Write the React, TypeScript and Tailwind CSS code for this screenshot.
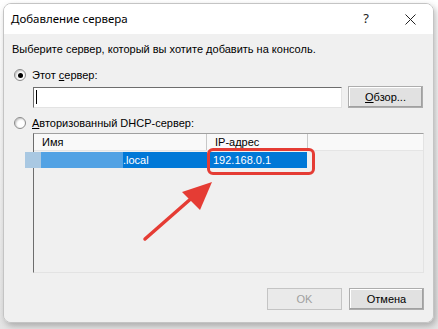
import React from "react";

function Radio({ checked }: { checked?: boolean }) {
  return (
    <span className="w-[12px] h-[12px] rounded-full border border-[#8a8a8a] bg-white shadow-[inset_1px_1px_2px_rgba(0,0,0,0.25)] flex items-center justify-center shrink-0">
      {checked && <span className="w-[5px] h-[5px] rounded-full bg-black" />}
    </span>
  );
}

export default function App() {
  return (
    <div
      className="w-[438px] h-[329px] bg-gradient-to-b from-white to-[#e4e4e4] pt-[3px] pl-[3px] overflow-hidden"
      style={{ fontFamily: '"Liberation Sans", Arial, sans-serif' }}
    >
      <div className="relative w-[431px] h-[320px] rounded-[8px] border border-[#c4c4c4] overflow-hidden flex flex-col shadow-[2px_3px_6px_rgba(0,0,0,0.25)]">
        {/* title bar */}
        <div className="h-[30px] bg-white flex items-center pl-[7px] shrink-0">
          <span className="text-[11.5px] text-black" style={{ fontFamily: '"Noto Sans", sans-serif' }}>
            Добавление сервера
          </span>
          <span className="ml-auto text-[13px] text-[#222] mr-[36px]" style={{ fontFamily: '"Noto Sans", sans-serif' }}>?</span>
          <svg width="11" height="11" viewBox="0 0 11 11" className="mr-[17px]">
            <path d="M0.5 0.5 L10.5 10.5 M10.5 0.5 L0.5 10.5" stroke="#222" strokeWidth="1" />
          </svg>
        </div>

        {/* body */}
        <div className="flex-1 bg-[#f0f0f0] flex flex-col pl-[8px] pr-[9px] pt-[8px] text-[11px] text-black">
          <div className="h-[14px] leading-[14px]">
            Выберите сервер, который вы хотите добавить на консоль.
          </div>

          <div className="flex items-center gap-[6px] mt-[12px] pl-[2px] h-[14px]">
            <Radio checked />
            <span className="leading-[14px]">
              Этот <span className="underline">с</span>ервер:
            </span>
          </div>

          <div className="flex items-center mt-[4px] pl-[21px] gap-[6px] h-[22px]">
            <div className="w-[309px] h-[21px] bg-white border-t border-l border-t-[#6d6d6d] border-l-[#6d6d6d] border-r border-b border-r-[#e3e3e3] border-b-[#e3e3e3] flex items-center pl-[2px]">
              <span className="w-px h-[14px] bg-black" />
            </div>
            <button className="w-[75px] h-[22px] bg-[#e1e1e1] border border-[#adadad] shadow-[inset_-1px_-1px_0_#a0a0a0,inset_1px_1px_0_#fff] text-[11px]">
              <span className="underline">О</span>бзор...
            </button>
          </div>

          <div className="flex items-center gap-[6px] mt-[8px] pl-[2px] h-[14px]">
            <Radio />
            <span className="leading-[14px]">
              <span className="underline">А</span>вторизованный DHCP-сервер:
            </span>
          </div>

          {/* list view */}
          <div className="ml-[21px] mt-[3px] w-[391px] h-[140px] border-t border-l border-t-[#a0a0a0] border-l-[#6d6d6d] border-r border-b border-r-[#e3e3e3] border-b-[#e3e3e3] bg-[#f0f0f0] flex flex-col shrink-0">
            <div className="h-[17px] flex bg-[#f9f9f9] border-b border-[#e5e5e5] shrink-0">
              <div className="w-[173px] border-r border-[#c8c8c8] pl-[8px] leading-[16px]">Имя</div>
              <div className="w-[101px] border-r border-[#c8c8c8] pl-[8px] leading-[16px]">IP-адрес</div>
              <div className="flex-1" />
            </div>
            <div className="flex mt-[1px] h-[16px]">
              <div className="w-[173px] bg-[#0078d7] text-white leading-[16px] pl-[89px]">.local</div>
              <div className="w-[101px] pl-[2px] pr-[1px]">
                <div className="bg-[#0078d7] text-white leading-[16px] pl-[4px]">192.168.0.1</div>
              </div>
            </div>
          </div>

          <div className="flex justify-end gap-[7px] mt-[15px]">
            <button className="w-[75px] h-[22px] bg-[#eaeaea] border border-[#c4c4c4] text-[#a0a0a0] text-[11px]">
              OK
            </button>
            <button className="w-[75px] h-[22px] bg-[#e1e1e1] border border-[#adadad] shadow-[inset_-1px_-1px_0_#a0a0a0,inset_1px_1px_0_#fff] text-[11px]">
              Отмена
            </button>
          </div>
        </div>

        {/* redaction */}
        <div className="absolute left-[21px] top-[148px] w-[16px] h-[16px] bg-[#a9c8e2]" />
        <div className="absolute left-[37px] top-[148px] w-[82px] h-[16px] bg-[#52a2e4]" />

        {/* highlight annotation */}
        <div className="absolute left-[203px] top-[144px] w-[108px] h-[27px] border-[3px] border-[#e53c34] rounded-[6px]" />
        <svg className="absolute left-0 top-0" width="431" height="320" viewBox="0 0 431 320">
          <line x1="141" y1="235" x2="190" y2="192" stroke="#e53c34" strokeWidth="3.5" strokeLinecap="round" />
          <polygon points="208,178 178,188 196,206" fill="#e53c34" />
        </svg>
      </div>
    </div>
  );
}
